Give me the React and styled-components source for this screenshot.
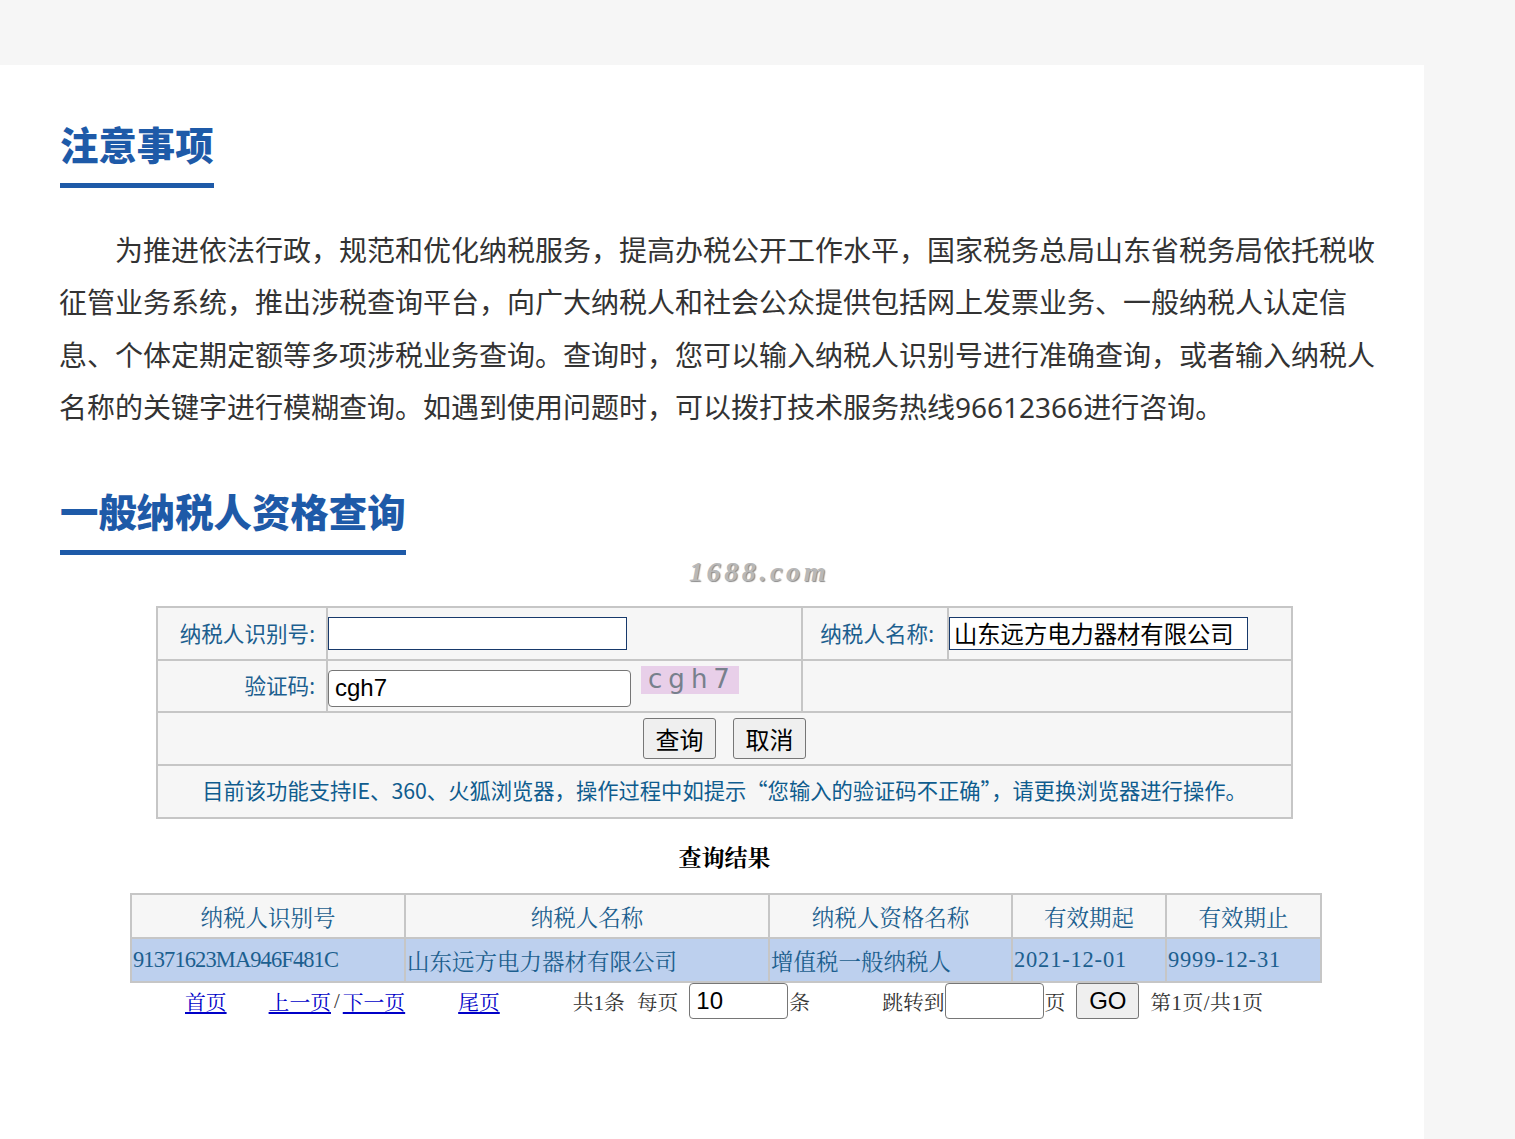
import React from 'react'
import styled, { createGlobalStyle } from 'styled-components'

const sans = `"Noto Sans", "Noto Sans CJK SC", sans-serif`
const cjk = `"Noto Sans CJK SC", "Noto Sans", sans-serif`
const arial = `"Liberation Sans", "Noto Sans CJK SC", sans-serif`
const serif = `"Liberation Serif", "Noto Serif CJK SC", "Noto Sans CJK SC", serif`

const GlobalStyle = createGlobalStyle`
  html, body {
    margin: 0;
    padding: 0;
    height: 100%;
    overflow: hidden;
    background: #f6f6f6;
  }
`

const Page = styled.div`
  position: relative;
  height: 1139px;
  padding-top: 65px;
  box-sizing: border-box;
  font-family: ${sans};
`

const Panel = styled.main`
  width: 1424px;
  height: 1074px;
  box-sizing: border-box;
  padding: 51px 35px 0 60px;
  background: #fff;
`

const Heading = styled.h2`
  display: table;
  margin: 0;
  padding-bottom: 9px;
  border-bottom: 5px solid #1e5aa8;
  color: #1e5aa8;
  font-size: 38.4px;
  font-weight: 900;
  line-height: 58px;
`

const Notice = styled.p`
  margin: 36px 0 49px -1px;
  color: #333;
  font-size: 28px;
  line-height: 52.4px;
  text-indent: 56px;
`

const Watermark = styled.div`
  position: absolute;
  top: 557px;
  left: 689px;
  color: #b8b8b8;
  font-family: "Liberation Serif", serif;
  font-size: 28px;
  font-style: italic;
  font-weight: 700;
  letter-spacing: 3.6px;
  line-height: 30px;
  text-shadow: 1px 1px 1px #8a8a8a;
`

const FormTable = styled.table`
  width: 1137px;
  margin: 51px auto 0 96px;
  border-collapse: collapse;
  table-layout: fixed;
  background: #f6f6f6;
  border: 2px solid #c6c6c6;
`

const FormCell = styled.td`
  height: ${(p) => p.$h || 50}px;
  width: ${(p) => (p.$w ? `${p.$w}px` : 'auto')};
  padding: 0;
  border: 2px solid #c6c6c6;
  box-sizing: border-box;
  text-align: left;
  vertical-align: middle;
`

const Label = styled(FormCell)`
  padding: 0 ${(p) => p.$pad ?? 11}px 2px 0;
  color: #1c5f8f;
  font-size: 21.6px;
  text-align: right;
`

const FlatInput = styled.input`
  display: block;
  width: ${(p) => p.$w}px;
  height: 33px;
  box-sizing: border-box;
  margin: 0;
  padding: 0 4px;
  border: 1px solid #17396b;
  border-radius: 0;
  background: #fff;
  color: #000;
  font-family: ${sans};
  font-size: 23.3px;
  outline: none;
`

const CodeRow = styled.div`
  display: flex;
  align-items: flex-start;
  gap: 10px;
  padding-top: 1px;
`

const RoundInput = styled.input`
  width: ${(p) => p.$w}px;
  height: ${(p) => p.$h}px;
  box-sizing: border-box;
  margin: ${(p) => p.$top || 0}px 0 0;
  padding: 0 6px;
  border: 1px solid #767676;
  border-radius: 4px;
  background: #fff;
  color: #000;
  font-family: ${arial};
  font-size: 24px;
  outline: none;
`

const Captcha = styled.span`
  display: flex;
  justify-content: center;
  width: 98px;
  height: 28px;
  box-sizing: border-box;
  padding-left: 4px;
  background: #e8cfe9;
  color: #77808c;
  font-family: "DejaVu Sans", sans-serif;
  font-size: 26px;
  letter-spacing: 6px;
  line-height: 27px;
`

const Actions = styled.div`
  display: flex;
  justify-content: center;
  gap: 17px;
`

const Button = styled.button`
  width: ${(p) => p.$w}px;
  height: ${(p) => p.$h}px;
  padding: 0;
  border: 1px solid #767676;
  border-radius: 3px;
  background: #efefef;
  color: #000;
  font-family: ${arial};
  font-size: 24px;
`

const Tip = styled(FormCell)`
  padding-bottom: 3px;
  color: #0f5c8e;
  font-family: ${cjk};
  font-size: 21.3px;
  text-align: center;
`

const ResultTitle = styled.h3`
  margin: 25px 0 19px;
  color: #000;
  font-family: ${serif};
  font-size: 23px;
  font-weight: 700;
  line-height: 30px;
  text-align: center;
`

const ResultTable = styled.table`
  width: 1190px;
  margin: 0 0 0 70px;
  border-collapse: collapse;
  table-layout: fixed;
  border: 2px solid #c6c6c6;
`

const HeadCell = styled.th`
  width: ${(p) => p.$w}px;
  height: 44px;
  box-sizing: border-box;
  padding: 0;
  border: 2px solid #c6c6c6;
  background: #f6f6f6;
  color: #1c5f8f;
  font-family: ${serif};
  font-size: 22.5px;
  font-weight: 400;
  text-align: center;
`

const DataCell = styled.td`
  height: 44px;
  box-sizing: border-box;
  padding: 0 1px;
  border: 2px solid #c6c6c6;
  background: #bdd0ee;
  color: #1c5f8f;
  font-family: ${serif};
  font-size: 22.5px;
  letter-spacing: ${(p) => p.$spacing || 0}px;
  white-space: nowrap;
`

const Pager = styled.nav`
  display: flex;
  align-items: center;
  height: 36px;
  padding-left: 125px;
  color: #333;
  font-family: ${serif};
  font-size: 20.8px;
`

const PagerLink = styled.a`
  margin-left: ${(p) => p.$gap || 0}px;
  color: #0000c8;
  text-decoration: underline;
  cursor: pointer;
`

const PagerText = styled.span`
  margin-left: ${(p) => p.$gap || 0}px;
  margin-right: ${(p) => p.$after || 0}px;
  letter-spacing: ${(p) => p.$spacing || 0}px;
  white-space: nowrap;
`

const PagerInput = styled(RoundInput)`
  flex: none;
  margin-left: ${(p) => p.$gap || 0}px;
`

const GoButton = styled(Button)`
  flex: none;
  margin-left: ${(p) => p.$gap || 0}px;
`

const columns = [
  { title: '纳税人识别号', width: 274 },
  { title: '纳税人名称', width: 364 },
  { title: '纳税人资格名称', width: 243 },
  { title: '有效期起', width: 154 },
  { title: '有效期止', width: 155 },
]

export default function App() {
  return (
    <Page>
      <GlobalStyle />
      <Panel>
        <Heading>注意事项</Heading>
        <Notice>
          为推进依法行政，规范和优化纳税服务，提高办税公开工作水平，国家税务总局山东省税务局依托税收征管业务系统，推出涉税查询平台，向广大纳税人和社会公众提供包括网上发票业务、一般纳税人认定信息、个体定期定额等多项涉税业务查询。查询时，您可以输入纳税人识别号进行准确查询，或者输入纳税人名称的关键字进行模糊查询。如遇到使用问题时，可以拨打技术服务热线96612366进行咨询。
        </Notice>
        <Heading>一般纳税人资格查询</Heading>

        <FormTable>
          <tbody>
            <tr>
              <Label $w={170} $h={53}>纳税人识别号:</Label>
              <FormCell $w={475}>
                <FlatInput $w={299} />
              </FormCell>
              <Label $w={146} $pad={13}>纳税人名称:</Label>
              <FormCell>
                <FlatInput $w={299} defaultValue="山东远方电力器材有限公司" />
              </FormCell>
            </tr>
            <tr>
              <Label $h={52}>验证码:</Label>
              <FormCell>
                <CodeRow>
                  <RoundInput $w={303} $h={37} $top={4} defaultValue="cgh7" />
                  <Captcha>cgh7</Captcha>
                </CodeRow>
              </FormCell>
              <FormCell colSpan={2} />
            </tr>
            <tr>
              <FormCell colSpan={4} $h={53}>
                <Actions>
                  <Button $w={73} $h={41}>查询</Button>
                  <Button $w={73} $h={41}>取消</Button>
                </Actions>
              </FormCell>
            </tr>
            <tr>
              <Tip colSpan={4} $h={53}>
                目前该功能支持IE、360、火狐浏览器，操作过程中如提示“您输入的验证码不正确”，请更换浏览器进行操作。
              </Tip>
            </tr>
          </tbody>
        </FormTable>

        <ResultTitle>查询结果</ResultTitle>
        <ResultTable>
          <thead>
            <tr>
              {columns.map((c) => (
                <HeadCell key={c.title} $w={c.width}>{c.title}</HeadCell>
              ))}
            </tr>
          </thead>
          <tbody>
            <tr>
              <DataCell $spacing={-0.9}>91371623MA946F481C</DataCell>
              <DataCell>山东远方电力器材有限公司</DataCell>
              <DataCell>增值税一般纳税人</DataCell>
              <DataCell $spacing={0.8}>2021-12-01</DataCell>
              <DataCell $spacing={0.8}>9999-12-31</DataCell>
            </tr>
          </tbody>
        </ResultTable>

        <Pager>
          <PagerLink>首页</PagerLink>
          <PagerLink $gap={42}>上一页</PagerLink>
          <PagerText $gap={3} $after={3}>/</PagerText>
          <PagerLink>下一页</PagerLink>
          <PagerLink $gap={53}>尾页</PagerLink>
          <PagerText $gap={73}>共1条</PagerText>
          <PagerText $gap={12}>每页</PagerText>
          <PagerInput $w={99} $h={36} $gap={11} defaultValue="10" />
          <PagerText $gap={1}>条</PagerText>
          <PagerText $gap={72}>跳转到</PagerText>
          <PagerInput $w={99} $h={36} />
          <PagerText $gap={1}>页</PagerText>
          <GoButton $w={63} $h={36} $gap={11}>GO</GoButton>
          <PagerText $gap={11} $spacing={0.5}>第1页/共1页</PagerText>
        </Pager>
      </Panel>
      <Watermark>1688.com</Watermark>
    </Page>
  )
}
